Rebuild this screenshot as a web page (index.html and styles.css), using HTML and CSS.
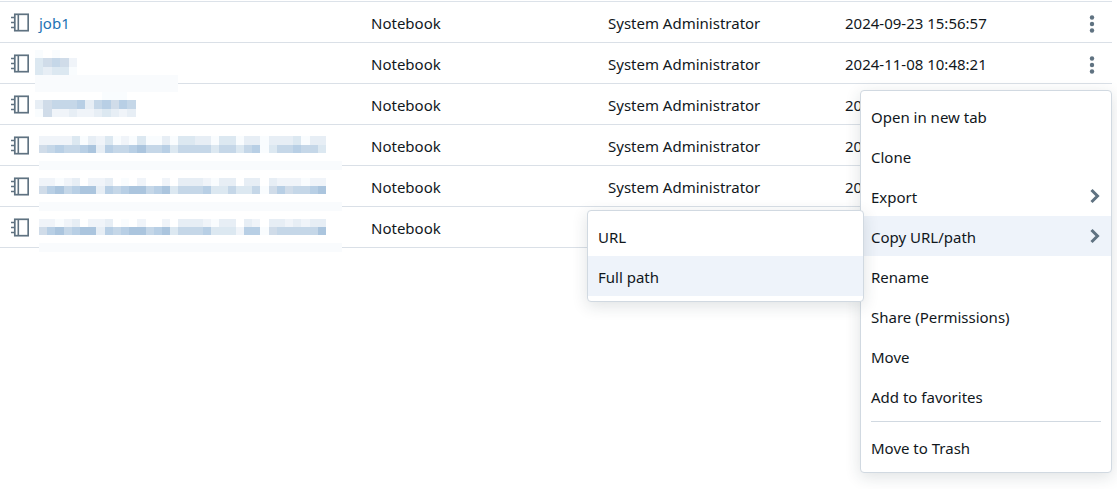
FILE: index.html
```html
<!DOCTYPE html>
<html lang="en">
<head>
<meta charset="utf-8">
<title>Workspace</title>
<link rel="stylesheet" href="styles.css">
</head>
<body>
<svg class="defs" aria-hidden="true">
  <symbol id="notebook" viewBox="0 0 18 19">
    <rect x="3.800" y="1.300" width="13.400" height="16.400" fill="none" stroke="#5f7281" stroke-width="1.700"/>
    <path d="M7.300 1v17" stroke="#5f7281" stroke-width="1.600"/>
    <path d="M0 4.500h3.500M0 9.500h3.500M0 14.500h3.500" stroke="#5f7281" stroke-width="1.600"/>
  </symbol>
  <symbol id="dots" viewBox="0 0 6 18">
    <circle cx="3" cy="2.500" r="2.200"/><circle cx="3" cy="9" r="2.200"/><circle cx="3" cy="15.500" r="2.200"/>
  </symbol>
  <symbol id="chevron" viewBox="0 0 10 16">
    <path d="M1.500 2l6 6-6 6" fill="none" stroke="#5f7281" stroke-width="3"/>
  </symbol>
</svg>
<main class="workspace">
  <table class="files">
    <colgroup><col class="col-name"><col class="col-type"><col class="col-owner"><col class="col-date"><col class="col-more"></colgroup>
    <tbody>
      <tr><td class="name"><svg class="icon"><use href="#notebook"/></svg><a href="#job1">job1</a></td><td>Notebook</td><td>System Administrator</td><td>2024-09-23 15:56:57</td><td class="more"><button type="button" aria-label="More actions"><svg><use href="#dots"/></svg></button></td></tr>
      <tr><td class="name"><svg class="icon"><use href="#notebook"/></svg><svg class="mosaic short" data-row="0"></svg></td><td>Notebook</td><td>System Administrator</td><td>2024-11-08 10:48:21</td><td class="more"><button type="button" aria-label="More actions"><svg><use href="#dots"/></svg></button></td></tr>
      <tr><td class="name"><svg class="icon"><use href="#notebook"/></svg><svg class="mosaic short" data-row="1"></svg></td><td>Notebook</td><td>System Administrator</td><td>20</td><td></td></tr>
      <tr><td class="name"><svg class="icon"><use href="#notebook"/></svg><svg class="mosaic" data-row="2"></svg></td><td>Notebook</td><td>System Administrator</td><td>20</td><td></td></tr>
      <tr><td class="name"><svg class="icon"><use href="#notebook"/></svg><svg class="mosaic" data-row="3"></svg></td><td>Notebook</td><td>System Administrator</td><td>20</td><td></td></tr>
      <tr><td class="name"><svg class="icon"><use href="#notebook"/></svg><svg class="mosaic" data-row="4"></svg></td><td>Notebook</td><td></td><td></td><td></td></tr>
    </tbody>
  </table>
  <div class="menu actions" role="menu">
    <button type="button" role="menuitem">Open in new tab</button>
    <button type="button" role="menuitem">Clone</button>
    <button type="button" role="menuitem">Export<svg><use href="#chevron"/></svg></button>
    <button type="button" role="menuitem" class="active">Copy URL/path<svg><use href="#chevron"/></svg></button>
    <button type="button" role="menuitem">Rename</button>
    <button type="button" role="menuitem">Share (Permissions)</button>
    <button type="button" role="menuitem">Move</button>
    <button type="button" role="menuitem">Add to favorites</button>
    <hr>
    <button type="button" role="menuitem">Move to Trash</button>
  </div>
  <div class="menu submenu" role="menu">
    <button type="button" role="menuitem">URL</button>
    <button type="button" role="menuitem" class="active">Full path</button>
  </div>
</main>
<script src="mosaic.js"></script>
</body>
</html>
```
FILE: styles.css
```css
* { box-sizing: border-box; }
body {
  margin: 0;
  background: #fff;
  color: #11171c;
  font: 15px/20px "Noto Sans", "Open Sans", sans-serif;
}
.defs { position: absolute; width: 0; height: 0; }
.workspace { position: relative; min-height: 100vh; padding: 1px 5px 0 0; overflow: hidden; }
.files {
  width: 100%;
  table-layout: fixed;
  border-collapse: separate;
  border-spacing: 0;
  border-top: 1px solid #dce2e9;
}
.col-type, .col-owner { width: 237px; }
.col-date { width: 227px; }
.col-more { width: 40px; }
.files td { height: 41px; padding: 2px 0 0; border-bottom: 1px solid #dae0e7; white-space: nowrap; }
.files .name { position: relative; padding-left: 11px; }
.icon { width: 18px; height: 19px; margin-right: 10px; vertical-align: -3px; }
.name a { color: #2272b4; text-decoration: none; }
.mosaic { position: absolute; top: 0; left: 39px; width: 303px; height: 52px; z-index: 1; }
.mosaic.short { left: 35px; }
.files .more { padding: 0; }
.more button {
  display: flex;
  width: 40px;
  height: 40px;
  padding: 4px 0 0 17px;
  align-items: center;
  border: 0;
  background: none;
}
.more svg { width: 6px; height: 18px; fill: #5f7281; }
.menu {
  position: absolute;
  z-index: 2;
  padding: 5px 0;
  border: 1px solid #d1d9e1;
  border-radius: 4px;
  background: #fff;
  box-shadow: 0 4px 16px rgba(27, 49, 57, 0.14);
}
.menu button {
  display: flex;
  width: 100%;
  height: 40px;
  padding: 2px 11px 0 10px;
  align-items: center;
  justify-content: space-between;
  border: 0;
  background: none;
  color: #11171c;
  font: inherit;
}
.menu .active { background: #eef3fa; }
.menu button svg { width: 10px; height: 16px; margin-bottom: 2px; }
.menu hr { height: 1px; margin: 5px 10px; border: 0; background: #d1d9e1; }
.actions { top: 90px; right: 5px; width: 252px; }
.submenu { z-index: 3; top: 210px; right: 253px; width: 277px; }
```
FILE: mosaic.js
```js
// Tile shades for the obscured names: "." is empty, a..h runs from faint to strong.
const shades = {
  a: "#f9fcfe", b: "#f0f4f9", c: "#e7eef5", d: "#dce8f1",
  e: "#d0dce9", f: "#c5d7e8", g: "#b8cfe5", h: "#abc5de"
};
const longBand = [0, 36, 303, 9];
const names = [
  { rows: ["a.a", "defeb", "dcdda"], y: [7, 15, 24, 32], band: [0, 32, 143, 17] },
  { rows: ["........aaa", "cefffgcfgegf", "aebbcbbcdcbc"], y: [8, 16, 25, 33] },
  { rows: ["bbbbdacbdabadaacaddccaddaccacccdacc", "efgffghcgffghffgdffffdffdfgadffgffd"], y: [11, 20, 28], band: longBand },
  { rows: ["bbabc.bbc.a.b..b.cccbacc.cc.cbbbabb", "eghfghhcgfghhfghdfffgddfddfaegeffgh"], y: [12, 20, 28], band: longBand },
  { rows: ["bbabc.bbc.a.b..b.cccbacc.cb.ccbcbcc", "eghfghhcgfghhfghdfffgdddbggaefffffh"], y: [12, 20, 28], band: longBand }
];

function rect(svg, x, y, width, height, fill) {
  const tile = document.createElementNS("http://www.w3.org/2000/svg", "rect");
  for (const [key, value] of Object.entries({ x, y, width, height, fill })) tile.setAttribute(key, value);
  svg.append(tile);
}

document.querySelectorAll(".mosaic").forEach(svg => {
  const { rows, y, band } = names[svg.dataset.row];
  const pitch = svg.classList.contains("short") ? 8.4 : 8.2;
  if (band) rect(svg, ...band, "#f9fbfd");
  rows.forEach((line, row) => [...line].forEach((key, n) => {
    if (!shades[key]) return;
    const x = Math.round(n * pitch);
    rect(svg, x, y[row], Math.round((n + 1) * pitch) - x, y[row + 1] - y[row], shades[key]);
  }));
});
```
